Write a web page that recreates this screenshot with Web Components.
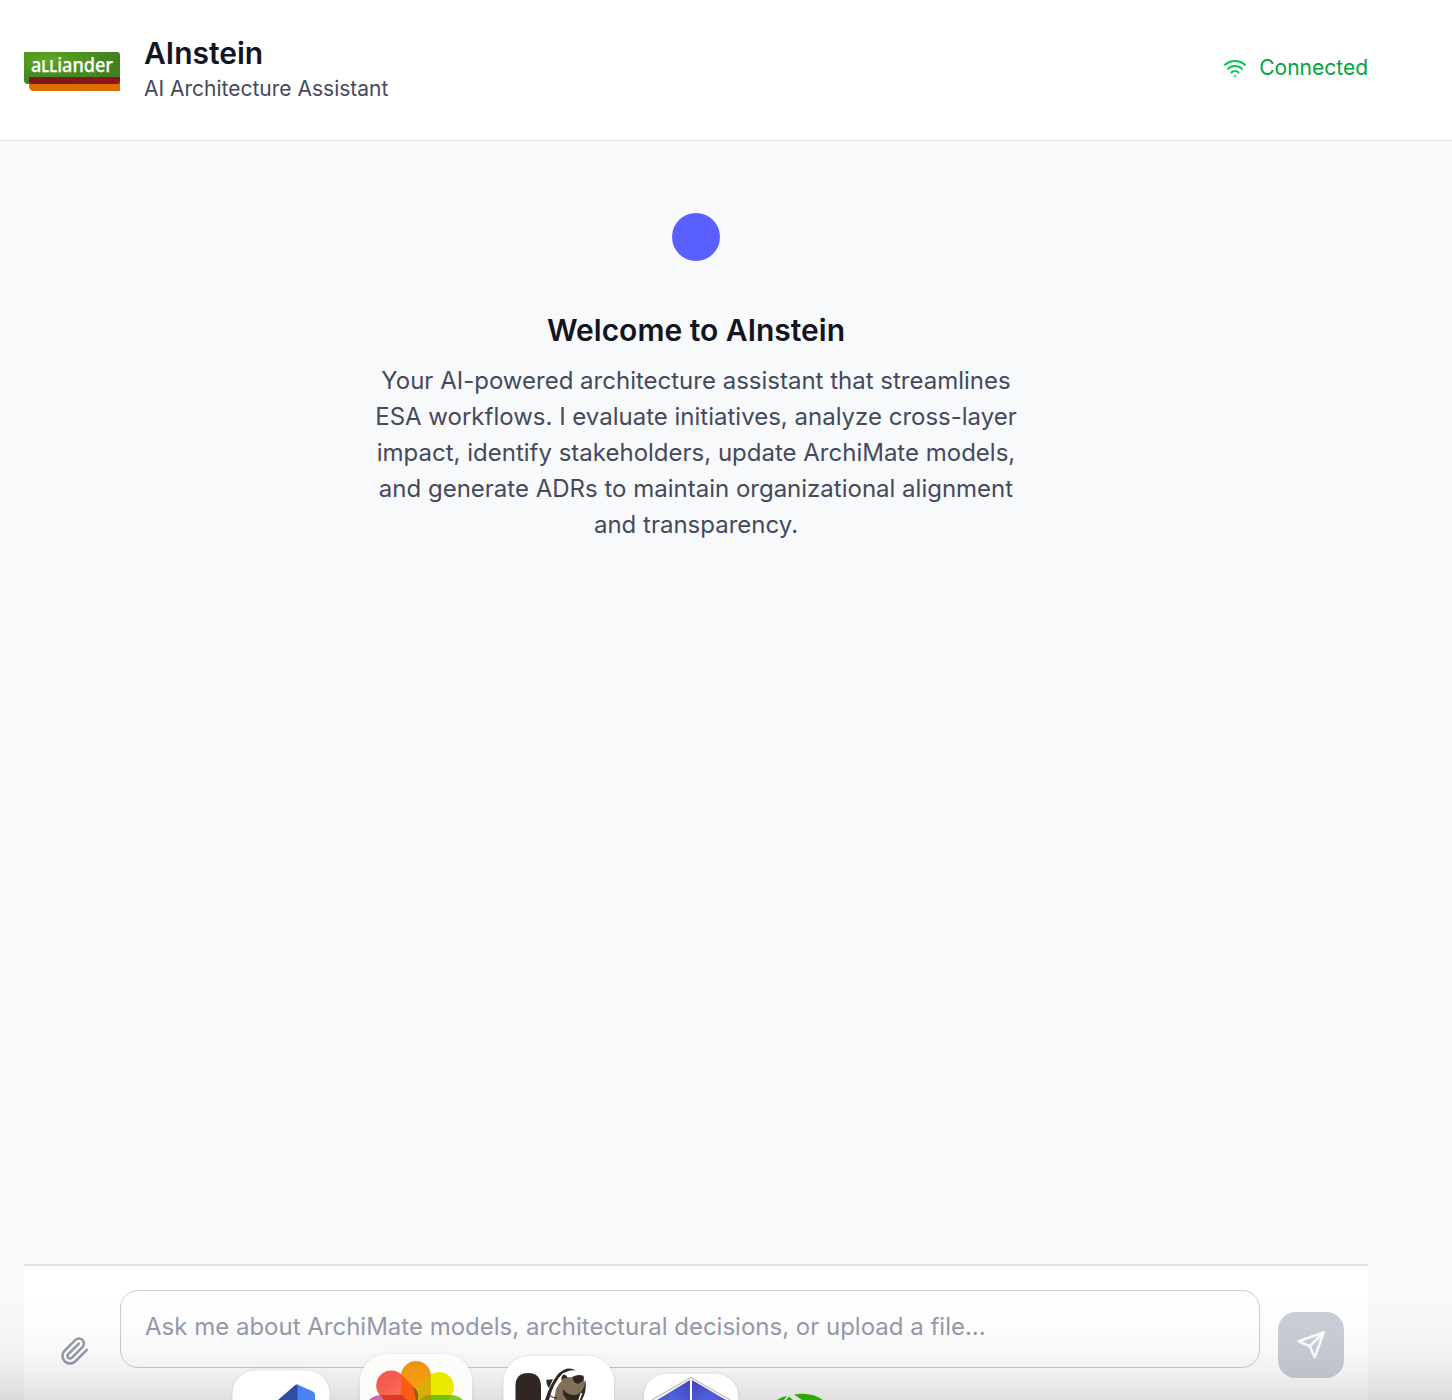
<!DOCTYPE html>
<html lang="en">
<head>
<meta charset="utf-8">
<title>AInstein</title>
<style>
html,body{margin:0;height:1400px;overflow:hidden}
body{font-family:Inter,"Liberation Sans",sans-serif;color:#45495c}
</style>
</head>
<body>
<ai-app></ai-app>
<script>
const define = (name, html) => {
  const template = document.createElement('template');
  template.innerHTML = html;
  customElements.define(name, class extends HTMLElement {
    constructor() {
      super();
      this.attachShadow({mode: 'open'}).append(template.content.cloneNode(true));
    }
  });
};

define('brand-logo', `
<style>:host{display:block;width:96px;height:40px}svg{display:block}</style>
<svg width="96" height="40" viewBox="0 0 96 40">
  <defs>
    <radialGradient id="g" cx=".24" cy=".25" r=".75"><stop offset="0" stop-color="#60a820"/><stop offset=".55" stop-color="#498f20"/><stop offset="1" stop-color="#428020"/></radialGradient>
    <linearGradient id="r"><stop offset="0" stop-color="#7c1a16"/><stop offset="1" stop-color="#8f141d"/></linearGradient>
    <clipPath id="c"><path d="M0 0H93Q96 0 96 3V29Q96 32 93 32H4Q0 32 0 28Z"/></clipPath>
  </defs>
  <path d="M5 25H96V39H10Q5 39 5 34Z" fill="#dc6d00"/>
  <g clip-path="url(#c)">
    <rect width="96" height="32" fill="url(#g)"/>
    <g fill="none" stroke="#72af42" stroke-opacity=".35"><path d="M54 0Q64 14 59 32M60 0Q70 14 64 32M66 0Q75 14 70 32"/></g>
    <path d="M5 25H96V32H8Q5 32 5 29Z" fill="url(#r)"/>
  </g>
  <text x="7" y="19.5" textLength="82" lengthAdjust="spacingAndGlyphs" font-family="'Noto Sans',sans-serif" font-size="20" font-weight="500" fill="#fff" stroke="#fff" stroke-width=".25">a<tspan font-size="16" font-weight="600">LL</tspan>iander</text>
</svg>`);

define('connection-status', `
<style>:host{display:flex;align-items:center;gap:12px;color:#00a43d;font-size:21px;line-height:30px}
svg{display:block;stroke:#00c84f}</style>
<svg width="24" height="24" viewBox="0 0 24 24" fill="none" stroke-width="2" stroke-linecap="round" stroke-linejoin="round"><path d="M12 20h.01M2 8.82a15 15 0 0 1 20 0M5 12.859a10 10 0 0 1 14 0M8.5 16.429a5 5 0 0 1 7 0"/></svg>
<span><slot></slot></span>`);

define('app-header', `
<style>:host{display:flex;box-sizing:border-box;height:141px;background:#fff;border-bottom:1px solid #e0e2ea;padding:35px 84px 36px 24px;align-items:flex-start;justify-content:space-between}
.brand{display:flex;gap:24px}brand-logo{margin-top:17px}
h1{margin:0;font-size:30px;line-height:36px;font-weight:600;color:#131521}
p{margin:3px 0 0;font-size:21px;line-height:30px}
connection-status{margin-top:18px}</style>
<div class="brand"><brand-logo></brand-logo><div><h1>AInstein</h1><p>AI Architecture Assistant</p></div></div>
<connection-status>Connected</connection-status>`);

define('welcome-message', `
<style>:host{display:flex;flex-direction:column;align-items:center;text-align:center;padding-top:72px}
i{width:48px;height:48px;border-radius:50%;background:#5a60ff}
h2{margin:48px 0 12px;font-size:30px;line-height:42px;font-weight:600;color:#131521}
p{margin:0;width:672px;font-size:24px;line-height:36px}</style>
<i></i><h2><slot name="title"></slot></h2><p><slot></slot></p>`);

define('message-composer', `
<style>:host{display:flex;box-sizing:border-box;height:136px;background:#fff;border-top:2px solid #e0e2ea;padding:24px 24px 0 36px;align-items:flex-start}
svg{display:block;fill:none;stroke-width:2;stroke-linecap:round;stroke-linejoin:round}
.clip{margin:46px 30px 0 0;stroke:#9599ab}
.field{flex:1;box-sizing:border-box;height:78px;border:1px solid #cbccd6;border-radius:18px;padding:18px 24px;font-size:24px;line-height:36px;color:#9599ab;background:#fff}
.send{width:66px;height:66px;margin:22px 0 0 18px;border-radius:18px;background:#cbced7;display:flex;align-items:center;justify-content:center;stroke:#fff}</style>
<svg class="clip" width="30" height="30" viewBox="0 0 24 24"><path d="m21.44 11.05-9.19 9.19a6 6 0 0 1-8.49-8.49l8.57-8.57A4 4 0 1 1 18 8.84l-8.59 8.57a2 2 0 0 1-2.83-2.83l8.49-8.48"/></svg>
<div class="field"><slot></slot></div>
<div class="send"><svg width="30" height="30" viewBox="0 0 24 24"><path d="m22 2-7 20-4-9-9-4Z"/><path d="M22 2 11 13"/></svg></div>`);

define('desktop-dock', `
<style>:host{display:block;position:absolute;left:0;top:1290px;width:1452px;height:110px;overflow:hidden;background:linear-gradient(rgba(0,0,0,0),rgba(0,0,0,.008) 30%,rgba(0,0,0,.03) 58%,rgba(0,0,0,.065) 78%,rgba(0,0,0,.12))}
svg{display:block}.tile{filter:drop-shadow(0 0 1.5px rgba(0,0,0,.1))}</style>
<svg width="1452" height="110" viewBox="0 1290 1452 110">
  <defs><radialGradient id="b" cx=".5" cy=".9" r=".8"><stop offset="0" stop-color="#5064de"/><stop offset="1" stop-color="#4646c0"/></radialGradient>
  <linearGradient id="o" x2="0" y2="1"><stop offset="0" stop-color="#f0920f"/><stop offset="1" stop-color="#f6a80f"/></linearGradient>
  <linearGradient id="p" y2="1"><stop offset="0" stop-color="#f3504f"/><stop offset="1" stop-color="#fc7850"/></linearGradient></defs>
  <g class="tile">
    <rect x="232.500" y="1370.500" width="97" height="97" rx="23" fill="#fff"/>
    <rect x="360" y="1354" width="112" height="112" rx="27" fill="#fcfcfa"/>
    <rect x="503.500" y="1356" width="110.500" height="110" rx="26" fill="#fff"/>
    <rect x="644" y="1374" width="94" height="94" rx="22" fill="#fff"/>
  </g>
  <path d="M278 1400 293.500 1386.500Q295.500 1384 298 1384.500V1400Z" fill="#2f4da5"/>
  <path d="M297.500 1384.500 313 1391.500Q315 1392.500 315 1395V1400H297.500Z" fill="#4a82f0"/>
  <g>
    <path d="M369 1400Q374 1395 382 1395H401V1400Z" fill="#ca6aac"/>
    <path d="M431 1395H450Q458 1395 463 1400H431Z" fill="#7fcb20"/>
    <path d="M380.500 1396A15 15 0 0 1 402 1375L417 1390V1400H384Z" fill="url(#p)"/>
    <path d="M451 1396A15 15 0 0 0 430 1375L416 1389V1400H448Z" fill="#e9ea00"/>
    <path d="M401 1376A15 15 0 0 1 431 1376V1400H401Z" fill="url(#o)"/>
    <path d="M401 1374 411 1384Q417 1390 418 1400H401Z" fill="#fb5c13"/>
    <path d="M431 1374V1400H416Q415 1391 421 1384Z" fill="#d8af08"/>
    <path d="M413 1387Q416 1389 417 1391Q419 1395 418 1400H416Z" fill="#98580c"/>
    <path d="M380 1395H402L407 1400H384Z" fill="#de382d"/>
    <path d="M429 1395H452L448 1400H420Q423 1396 429 1395Z" fill="#78bf0b"/>
    <path d="M429 1395H431V1400H420Q423 1396 429 1395Z" fill="#a2a005"/>
  </g>
  <path d="M515.500 1400V1385Q516 1373 528 1373Q540.500 1373 541 1386V1400Z" fill="#302723"/>
  <path d="M546.500 1379.500Q549 1380 553 1379L549 1388Q546 1385 546.500 1379.500Z" fill="#302723"/>
  <path d="M552.500 1400Q556 1383 563 1378Q568 1375 574 1377Q582 1374 585 1382Q585 1391 580 1396L566 1400Z" fill="#81705a"/>
  <path d="M545 1400Q550 1384 558 1374Q567 1365 576 1370.500Q566 1369 559 1378Q554 1387 552 1400Z" fill="#302723"/>
  <path d="M549 1400Q553 1383 563 1373Q569 1371 574 1374L572 1377Q562 1377 556 1389L554 1400Z" fill="#fff"/>
  <path d="M554 1399Q558 1386 563 1379L569 1377V1400Z" fill="#81705a"/>
  <path d="M561.500 1381Q561 1375 564 1374.500Q567 1375 567.500 1378Q563 1378 561.500 1381Z" fill="#302723"/>
  <path d="M572.500 1377Q577 1374 583 1375.500Q586 1379 580 1383Q576 1385 573.500 1381Z" fill="#302723"/>
  <path d="M563 1389Q566 1394 573 1395Q580 1396 584 1387L585.500 1380Q587 1391 582 1400H567Q562 1395 563 1389Z" fill="#302723"/>
  <path d="M549 1395Q553 1398 557 1398" fill="none" stroke="#302723" stroke-width="1"/>
  <path d="M579 1400 581.500 1393" fill="none" stroke="#fff" stroke-width="1.500"/>
  <path d="M652 1400 691 1377.500 730 1400" fill="none" stroke="#c8c9c3" stroke-width="1.500"/>
  <path d="M657 1400 690 1380V1400Z" fill="url(#b)"/><path d="M692 1380 726 1400H692Z" fill="url(#b)"/>
  <path d="M777 1400Q782 1396.500 787 1396L784 1400ZM789 1396.500 793 1400H786ZM794 1394.500Q811 1391.500 823 1400H802Z" fill="#28aa00"/>
</svg>`);

define('ai-app', `
<style>:host{display:flex;flex-direction:column;height:1400px;background:#f8f9fb}
main{flex:1;width:1344px;margin-left:24px;display:flex;flex-direction:column;justify-content:space-between}</style>
<app-header></app-header>
<main>
  <welcome-message><span slot="title">Welcome to AInstein</span>Your AI-powered architecture assistant that streamlines ESA workflows. I evaluate initiatives, analyze cross-layer impact, identify stakeholders, update ArchiMate models, and generate ADRs to maintain organizational alignment and transparency.</welcome-message>
  <message-composer>Ask me about ArchiMate models, architectural decisions, or upload a file...</message-composer>
</main>
<desktop-dock></desktop-dock>`);
</script>
</body>
</html>
